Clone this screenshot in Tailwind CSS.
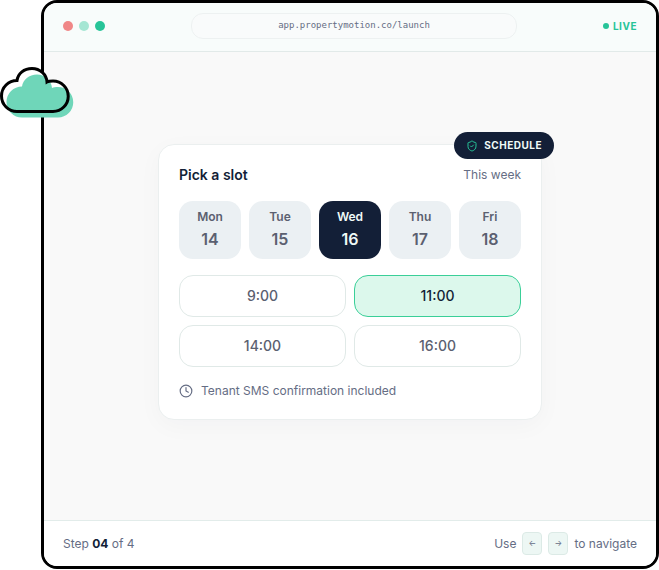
<!DOCTYPE html>
<html lang="en">
<head>
<meta charset="UTF-8">
<meta name="viewport" content="width=device-width, initial-scale=1.0">
<title>PropertyMotion - Schedule</title>
<script src="https://cdn.jsdelivr.net/npm/@tailwindcss/browser@4"></script>
</head>
<body class="relative bg-white min-h-screen flex flex-col pl-[41px] pb-px font-['Inter',sans-serif] text-[#656d84]">

<!-- Browser window -->
<div class="flex-1 flex flex-col bg-[#f9f9f9] border-3 border-black rounded-2xl overflow-hidden">

  <!-- Top bar -->
  <header class="flex items-center justify-between h-[49px] px-[19px] pb-0.5 bg-[#f8fcfb] border-b border-[#e2eae9]">
    <div class="flex gap-1.5">
      <span class="size-[10px] rounded-full bg-[#f08787]"></span>
      <span class="size-[10px] rounded-full bg-[#a5e6d3]"></span>
      <span class="size-[10px] rounded-full bg-[#27c498]"></span>
    </div>
    <div class="flex-1 max-w-[326px] h-[26px] flex items-center justify-center rounded-xl border border-[#edf1f1] bg-[#f9fbfb] font-['DejaVu_Sans_Mono',monospace] text-[9px]">app.propertymotion.co/launch</div>
    <div class="flex items-center gap-1 text-[10px] font-bold tracking-wider text-[#27c498]">
      <span class="size-1.5 rounded-full bg-[#27c498]"></span>
      LIVE
    </div>
  </header>

  <!-- Main content -->
  <main class="flex-1 flex items-center justify-center px-5 pb-2">
    <section class="relative w-full max-w-[384px] bg-white rounded-2xl border border-[#ebefef] p-5 shadow-[0_6px_24px_rgba(20,31,56,0.03)]">

      <!-- Badge -->
      <div class="absolute -top-[13px] -right-[13px] h-[27px] px-3 flex items-center gap-1.5 rounded-full bg-[#131f37] text-[#f0faf7] text-[10px] font-bold tracking-wider">
        <svg class="size-3 text-[#27c498]" viewBox="0 0 24 24" fill="none" stroke="currentColor" stroke-width="2" stroke-linecap="round" stroke-linejoin="round">
          <path d="M20 13c0 5-3.500 7.500-7.660 8.950a1 1 0 0 1-.67-.01C7.500 20.500 4 18 4 13V6a1 1 0 0 1 1-1c2 0 4.500-1.200 6.240-2.720a1.170 1.170 0 0 1 1.520 0C14.510 3.810 17 5 19 5a1 1 0 0 1 1 1z"/>
          <path d="m9 12 2 2 4-4"/>
        </svg>
        SCHEDULE
      </div>

      <div class="flex items-center justify-between h-5 mb-4">
        <h2 class="text-sm font-semibold text-[#131f37]">Pick a slot</h2>
        <span class="text-xs">This week</span>
      </div>

      <!-- Days -->
      <div class="grid grid-cols-5 gap-2 mb-4">
        <button type="button" class="h-[58px] pt-0.5 flex flex-col items-center justify-center rounded-[14px] bg-[#ebf0f3] text-[#5b6070] font-semibold">
          <span class="text-xs leading-4">Mon</span>
          <span class="text-base leading-7">14</span>
        </button>
        <button type="button" class="h-[58px] pt-0.5 flex flex-col items-center justify-center rounded-[14px] bg-[#ebf0f3] text-[#5b6070] font-semibold">
          <span class="text-xs leading-4">Tue</span>
          <span class="text-base leading-7">15</span>
        </button>
        <button type="button" aria-pressed="true" class="h-[58px] pt-0.5 flex flex-col items-center justify-center rounded-[14px] bg-[#131f37] text-[#f0faf7] font-semibold">
          <span class="text-xs leading-4">Wed</span>
          <span class="text-base leading-7">16</span>
        </button>
        <button type="button" class="h-[58px] pt-0.5 flex flex-col items-center justify-center rounded-[14px] bg-[#ebf0f3] text-[#5b6070] font-semibold">
          <span class="text-xs leading-4">Thu</span>
          <span class="text-base leading-7">17</span>
        </button>
        <button type="button" class="h-[58px] pt-0.5 flex flex-col items-center justify-center rounded-[14px] bg-[#ebf0f3] text-[#5b6070] font-semibold">
          <span class="text-xs leading-4">Fri</span>
          <span class="text-base leading-7">18</span>
        </button>
      </div>

      <!-- Times -->
      <div class="grid grid-cols-2 gap-2 mb-4 text-sm font-medium text-[#5b6070]">
        <button type="button" class="h-[42px] rounded-[14px] border border-[#e0e9e7] bg-white">9:00</button>
        <button type="button" aria-pressed="true" class="h-[42px] rounded-[14px] border border-[#3acf98] bg-[#dcf8ec] text-[#131f37]">11:00</button>
        <button type="button" class="h-[42px] rounded-[14px] border border-[#e0e9e7] bg-white">14:00</button>
        <button type="button" class="h-[42px] rounded-[14px] border border-[#e0e9e7] bg-white">16:00</button>
      </div>

      <div class="flex items-center gap-2 text-xs">
        <svg class="size-3.5" viewBox="0 0 24 24" fill="none" stroke="currentColor" stroke-width="2" stroke-linecap="round" stroke-linejoin="round">
          <circle cx="12" cy="12" r="10"/>
          <path d="M12 6v6l4 2"/>
        </svg>
        Tenant SMS confirmation included
      </div>
    </section>
  </main>

  <!-- Bottom bar -->
  <footer class="flex items-center justify-between h-[46px] px-[19px] bg-white border-t border-[#e2ecea] text-xs">
    <p>Step <span class="font-bold text-[#131f37]">04</span> of 4</p>
    <div class="flex items-center gap-1.5">
      Use
      <kbd class="w-5 h-[23px] flex items-center justify-center rounded border border-[#dceae6] bg-[#edf7f4] font-['Inter',sans-serif] text-[8px]">←</kbd>
      <kbd class="w-5 h-[23px] flex items-center justify-center rounded border border-[#dceae6] bg-[#edf7f4] font-['Inter',sans-serif] text-[8px]">→</kbd>
      to navigate
    </div>
  </footer>
</div>

<!-- Cloud -->
<svg class="absolute left-0 top-[66px] w-[74px] h-[52px]" viewBox="0 0 74 52" aria-hidden="true">
  <path fill="#fff" d="M17 45.500a15.500 15.500 0 0 1 0-31c1-7 7-12 15-12s14.500 6 15 13.500c1.500-.8 3.500-1 6-1a15.250 15.250 0 0 1 0 30.500z"/>
  <path fill="#6fd6b9" transform="translate(5 6)" d="M17 45.500a15.500 15.500 0 0 1 0-31c1-7 7-12 15-12s14.500 6 15 13.500c1.500-.8 3.500-1 6-1a15.250 15.250 0 0 1 0 30.500z"/>
  <path fill="none" stroke="#000" stroke-width="3" d="M17 45.500a15.500 15.500 0 0 1 0-31c1-7 7-12 15-12s14.500 6 15 13.500c1.500-.8 3.500-1 6-1a15.250 15.250 0 0 1 0 30.500z"/>
</svg>
</body>
</html>
